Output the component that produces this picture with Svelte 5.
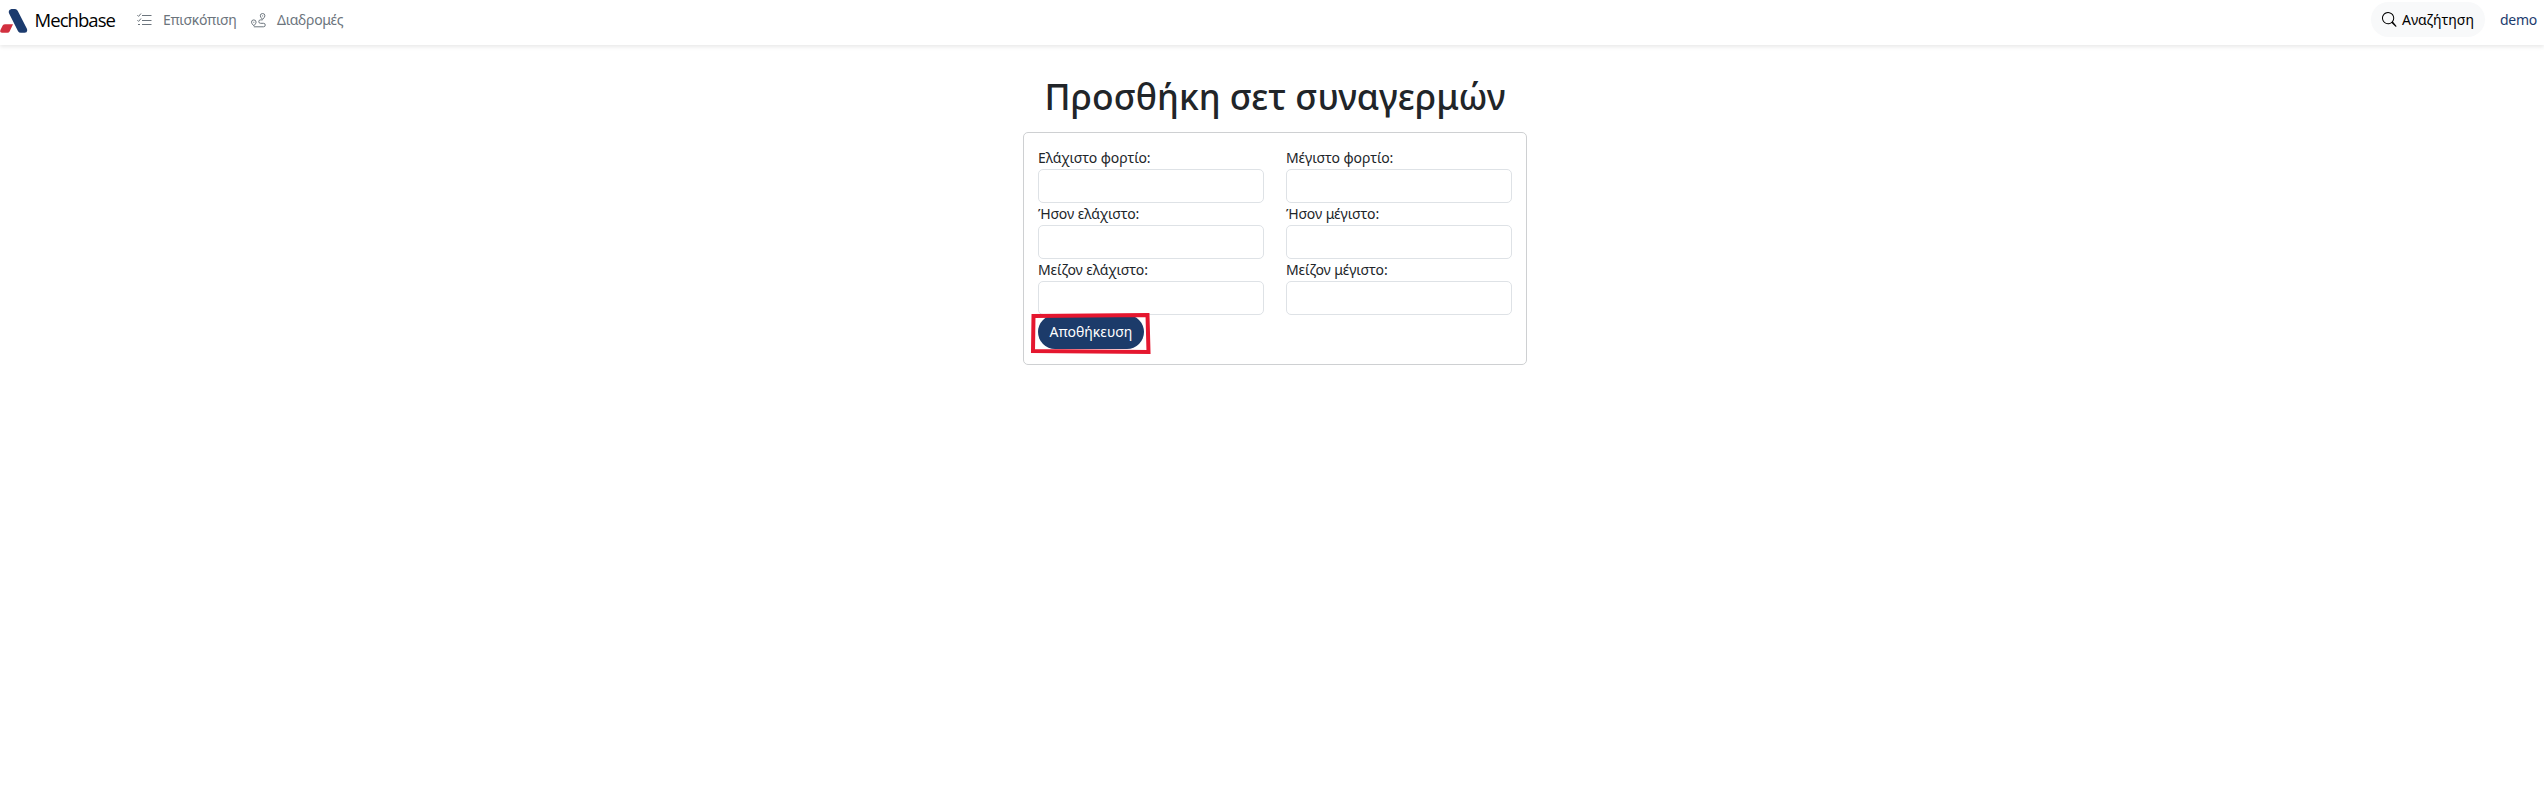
<script>
  const rows = [
    [{ id: 'minload', label: 'Ελάχιστο φορτίο:' }, { id: 'maxload', label: 'Μέγιστο φορτίο:' }],
    [{ id: 'lowmin', label: 'Ήσον ελάχιστο:' }, { id: 'lowmax', label: 'Ήσον μέγιστο:' }],
    [{ id: 'highmin', label: 'Μείζον ελάχιστο:' }, { id: 'highmax', label: 'Μείζον μέγιστο:' }]
  ];
</script>

<header>
  <a class="brand" href="#home">
    <svg width="29" height="26" viewBox="0 0 29 26">
      <path d="M12 0.300h3.800q1.800 0 2.800 1.800l9.600 18.800q1.600 4.200-2.400 4.600h-3.800q-2 0-3-1.800L9.600 5q-1.500-3.600 2.400-4.700z" fill="#1c3b6e" />
      <path d="M5.500 16.300h8.200l-3.600 7.700q-.7 1.500-2.200 1.500H2q-2.800-.3-1.400-3.300l2.200-4.400q.9-1.500 2.700-1.500z" fill="#d2303f" />
    </svg>
    <span>Mechbase</span>
  </a>
  <nav>
    <a href="#overview">
      <svg class="check" width="15" height="13" viewBox="0 0 15 13" fill="none" stroke="currentColor">
        <path d="M5 2.500h9.500M5 7.500h9.500M5 11.500h9.500M.4 2.200l1.200 1.200L4 .5M.4 7.200l1.200 1.200L4 5.500M1 11.500h2" />
      </svg>
      <span>Επισκόπιση</span>
    </a>
    <a href="#routes">
      <svg class="route" width="15" height="15" viewBox="0 0 15 15" fill="none" stroke="currentColor">
        <path d="M2.800 12.800Q.5 10.500.5 9.200a2.300 2.300 0 0 1 4.600 0Q5.100 10.500 2.800 12.800zM11.600 6.400Q9.300 4.100 9.300 2.800a2.300 2.300 0 0 1 4.600 0Q13.900 4.100 11.600 6.400zM11.600 6.900H9.500a1.700 1.700 0 0 0 0 3.400h3a1.700 1.700 0 0 1 0 3.500H2.800" />
        <path d="M2.300 9.300h1M11.100 2.900h1" />
      </svg>
      <span>Διαδρομές</span>
    </a>
  </nav>
  <button class="search">
    <svg width="15" height="15" viewBox="0 0 16 16" fill="currentColor">
      <path d="M11.742 10.344a6.500 6.500 0 1 0-1.397 1.398l3.850 3.850a.6.6 0 0 0 1-.9l-3.453-4.348zM12 6.500a5.500 5.500 0 1 1-11 0 5.500 5.500 0 0 1 11 0z" />
    </svg>
    <span>Αναζήτηση</span>
  </button>
  <a class="user" href="#user">demo</a>
</header>

<main>
  <h1>Προσθήκη σετ συναγερμών</h1>
  <form>
    {#each rows as row}
      <div class="row">
        {#each row as field}
          <div class="field">
            <label for={field.id}>{field.label}</label>
            <input id={field.id} type="text" />
          </div>
        {/each}
      </div>
    {/each}
    <div class="actions">
      <button class="save" type="button">Αποθήκευση</button>
      <svg class="mark" width="122" height="43" viewBox="0 0 122 43">
        <path d="M3.500 3L117.500 2L118.500 39L3 38Z" fill="none" stroke="#e5172f" stroke-width="4" />
      </svg>
    </div>
  </form>
</main>

<style>
  :global(body) {
    margin: 0;
    background: #fff;
    color: #212529;
    font: 14px/21px "Noto Sans", sans-serif;
  }
  a { color: inherit; text-decoration: none; }
  header {
    display: flex;
    align-items: center;
    box-sizing: border-box;
    height: 45px;
    padding: 0 8px 6px 0;
    box-shadow: 0 2px 4px rgba(0, 0, 0, .09);
  }
  .brand { display: flex; align-items: center; width: 115px; gap: 7px; color: #000; white-space: nowrap; }
  .brand svg { margin-top: 2px; }
  .brand span { font: 18.500px/30px "Open Sans", sans-serif; letter-spacing: -.95px; }
  nav { display: flex; margin-left: 22px; color: #6c757d; letter-spacing: -.28px; white-space: nowrap; }
  nav a { display: flex; align-items: center; }
  nav a:first-child { width: 114px; }
  .check { margin-right: 11px; }
  .route { margin: 1px 11px 0 0; }
  button { font: inherit; border: 0; border-radius: 18px; }
  .search {
    display: flex;
    align-items: center;
    gap: 5px;
    margin-left: auto;
    width: 114px;
    height: 35px;
    padding: 0 11px;
    background: #f8f9fa;
    color: #000;
    white-space: nowrap;
  }
  .user { width: 36px; margin-left: 15px; color: #1c3b6e; letter-spacing: -.3px; }
  main { display: flex; flex-direction: column; align-items: center; padding: 29px 0 0 6px; }
  h1 { margin: 0 0 14px; font-size: 35.400px; line-height: 44px; font-weight: 500; white-space: nowrap; }
  form {
    box-sizing: border-box;
    width: 504px;
    height: 233px;
    padding: 14px 14px 15px;
    border: 1px solid #ced0d2;
    border-radius: 5px;
  }
  .row { display: flex; justify-content: space-between; height: 56px; }
  .field { width: 226px; }
  label { display: block; height: 22px; white-space: nowrap; letter-spacing: -.08px; }
  input {
    display: block;
    box-sizing: border-box;
    width: 226px;
    height: 34px;
    border: 1px solid #dee2e6;
    border-radius: 5px;
    background: #fff;
  }
  .actions { position: relative; }
  .save { display: block; width: 106px; height: 34px; padding: 0 0 1px; background: #1c3b6a; color: #fff; }
  .mark { position: absolute; left: -8px; top: -2px; }
</style>
